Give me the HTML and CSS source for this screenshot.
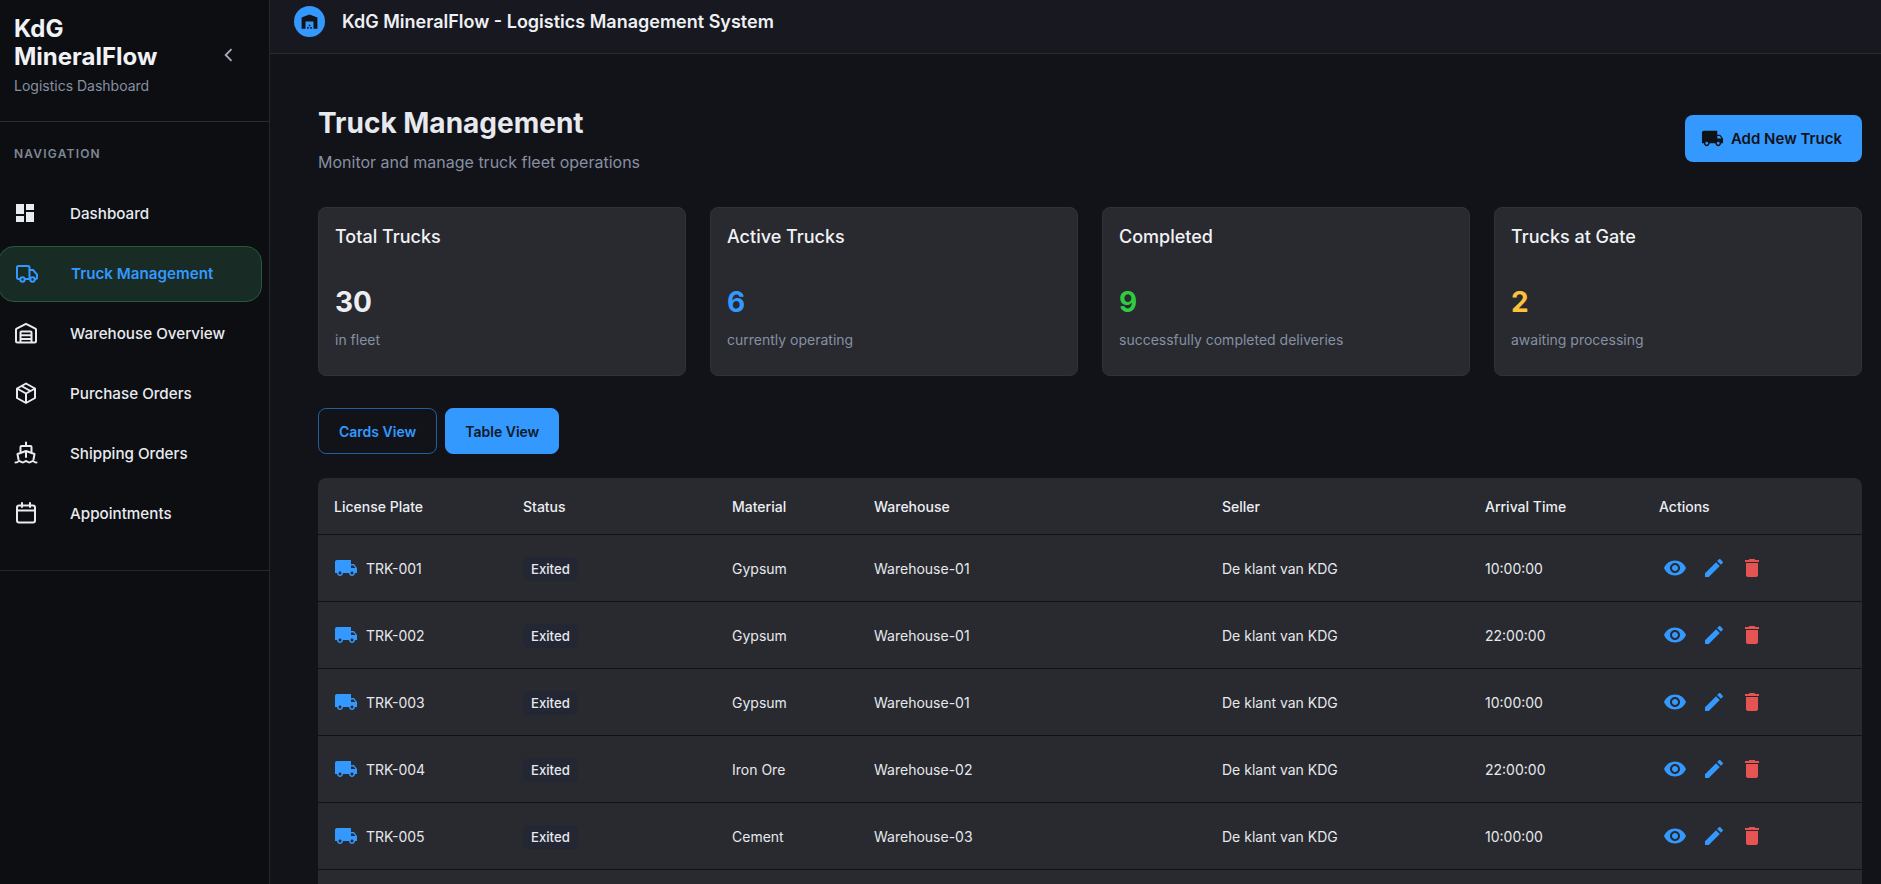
FILE: index.html
```html
<!DOCTYPE html>
<html lang="en">
<head>
<meta charset="UTF-8">
<meta name="viewport" content="width=device-width, initial-scale=1.0">
<title>Truck Management</title>
<link rel="stylesheet" href="styles.css">
</head>
<body>
<div class="app">
  <aside class="sidebar">
    <div class="brand">
      <div>
        <h1>KdG MineralFlow</h1>
        <p>Logistics Dashboard</p>
      </div>
      <svg class="collapse" viewBox="0 0 24 24"><path d="M15 5l-7 7 7 7" fill="none" stroke="currentColor" stroke-width="2.2"/></svg>
    </div>
    <div class="nav-title">NAVIGATION</div>
    <nav class="nav">
      <a class="nav-item">
        <svg class="nav-icon" viewBox="1 0 24 24"><path fill="currentColor" d="M3 13h8V3H3v10zm0 8h8v-6H3v6zm10 0h8V11h-8v10zm0-18v6h8V3h-8z"/></svg>
        <span>Dashboard</span>
      </a>
      <a class="nav-item active">
        <svg class="nav-icon" viewBox="0 0 24 24" fill="none" stroke="currentColor" stroke-width="2" stroke-linecap="round" stroke-linejoin="round"><path d="M5 18H3.5A1.5 1.5 0 0 1 2 16.5V6.5A1.5 1.5 0 0 1 3.5 5H13a1.5 1.5 0 0 1 1.5 1.5V18H10"/><path d="M14.5 9h3.6l3.9 4.6v3.2a1.2 1.2 0 0 1-1.2 1.2H20"/><circle cx="7.5" cy="18.5" r="2.2"/><circle cx="17.5" cy="18.5" r="2.2"/></svg>
        <span>Truck Management</span>
      </a>
      <a class="nav-item">
        <svg class="nav-icon" viewBox="0 0 24 24" fill="none" stroke="currentColor" stroke-width="2" stroke-linejoin="round"><path d="M3.500 21.500A1.500 1.500 0 0 1 2 20V8.500a1 1 0 0 1 .6-.9L12 2.800l9.400 4.800a1 1 0 0 1 .6.9V20a1.500 1.500 0 0 1-1.500 1.500z"/><path d="M6.500 21.500V11.500a1 1 0 0 1 1-1h9a1 1 0 0 1 1 1v10M6.500 14.300h11M6.500 18h11"/></svg>
        <span>Warehouse Overview</span>
      </a>
      <a class="nav-item">
        <svg class="nav-icon" viewBox="0 0 24 24" fill="none" stroke="currentColor" stroke-width="2" stroke-linejoin="round"><path d="M12 2.500l9 5v9.500l-9 5-9-5V7.500z"/><path d="M3 7.500l9 5 9-5M12 12.500V22M7.500 5l9 5"/></svg>
        <span>Purchase Orders</span>
      </a>
      <a class="nav-item">
        <svg class="nav-icon" viewBox="0 0 24 24" fill="none" stroke="currentColor" stroke-width="2" stroke-linejoin="round" stroke-linecap="round"><path d="M12 1.500V5M6.500 10.500V6a1 1 0 0 1 1-1h9a1 1 0 0 1 1 1v4.500M4.500 18.500L3.500 13 12 10l8.500 3-1 5.500M12 10v6"/><path d="M1.500 21.500c2 0 3-1.500 3.800-1.500s1.700 1.500 3.400 1.500 2.500-1.500 3.300-1.500 1.600 1.500 3.300 1.500 2.600-1.500 3.400-1.500 1.800 1.500 3.800 1.500"/></svg>
        <span>Shipping Orders</span>
      </a>
      <a class="nav-item">
        <svg class="nav-icon" viewBox="0 0 24 24" fill="none" stroke="currentColor" stroke-width="2" stroke-linejoin="round" stroke-linecap="round"><rect x="3" y="4.500" width="18" height="17" rx="2"/><path d="M3 9.500h18M8 2v4M16 2v4"/></svg>
        <span>Appointments</span>
      </a>
    </nav>
    <div class="sidebar-line"></div>
  </aside>

  <div class="content">
    <header class="topbar">
      <div class="logo">
        <svg viewBox="0 0 24 24"><path fill="#12141a" d="M22 21V7L12 3 2 7v14h5v-9h10v9h5zm-11-2H9v2h2v-2zm2-3h-2v2h2v-2zm2 3h-2v2h2v-2z"/></svg>
      </div>
      <span class="topbar-title">KdG MineralFlow - Logistics Management System</span>
    </header>

    <main class="main">
      <div class="page-head">
        <div>
          <h2>Truck Management</h2>
          <p>Monitor and manage truck fleet operations</p>
        </div>
        <button class="btn-add">
          <svg class="truck" viewBox="0 0 24 24"><path fill="currentColor" d="M20 8h-3V4H3c-1.100 0-2 .9-2 2v11h2c0 1.660 1.340 3 3 3s3-1.340 3-3h6c0 1.660 1.340 3 3 3s3-1.340 3-3h2v-5l-3-4zM6 18.500c-.83 0-1.500-.67-1.500-1.500s.67-1.500 1.500-1.500 1.500.67 1.500 1.500-.67 1.500-1.500 1.500zm13.500-9l1.960 2.500H17V9.500h2.500zm-1.500 9c-.83 0-1.500-.67-1.500-1.500s.67-1.500 1.500-1.500 1.500.67 1.500 1.500-.67 1.500-1.500 1.500z"/></svg>
          Add New Truck
        </button>
      </div>

      <section class="stats">
        <div class="stat">
          <h3>Total Trucks</h3>
          <div class="stat-num">30</div>
          <div class="stat-sub">in fleet</div>
        </div>
        <div class="stat">
          <h3>Active Trucks</h3>
          <div class="stat-num blue">6</div>
          <div class="stat-sub">currently operating</div>
        </div>
        <div class="stat">
          <h3>Completed</h3>
          <div class="stat-num green">9</div>
          <div class="stat-sub">successfully completed deliveries</div>
        </div>
        <div class="stat">
          <h3>Trucks at Gate</h3>
          <div class="stat-num yellow">2</div>
          <div class="stat-sub">awaiting processing</div>
        </div>
      </section>

      <div class="views">
        <button class="view-btn">Cards View</button>
        <button class="view-btn selected">Table View</button>
      </div>

      <table class="trucks">
        <thead>
          <tr>
            <th class="c-plate">License Plate</th>
            <th class="c-status">Status</th>
            <th class="c-material">Material</th>
            <th class="c-warehouse">Warehouse</th>
            <th class="c-seller">Seller</th>
            <th class="c-time">Arrival Time</th>
            <th>Actions</th>
          </tr>
        </thead>
        <tbody id="rows"></tbody>
      </table>
    </main>
  </div>
</div>
<script>
    const trucks = [
        ['TRK-001', 'Gypsum', 'Warehouse-01', '10:00:00'],
        ['TRK-002', 'Gypsum', 'Warehouse-01', '22:00:00'],
        ['TRK-003', 'Gypsum', 'Warehouse-01', '10:00:00'],
        ['TRK-004', 'Iron Ore', 'Warehouse-02', '22:00:00'],
        ['TRK-005', 'Cement', 'Warehouse-03', '10:00:00']
    ];
    const truckPath = 'M20 8h-3V4H3c-1.100 0-2 .9-2 2v11h2c0 1.660 1.340 3 3 3s3-1.340 3-3h6c0 1.660 1.340 3 3 3s3-1.340 3-3h2v-5l-3-4zM6 18.500c-.83 0-1.500-.67-1.500-1.500s.67-1.500 1.500-1.500 1.500.67 1.500 1.500-.67 1.500-1.500 1.500zm13.500-9l1.960 2.500H17V9.500h2.500zm-1.500 9c-.83 0-1.500-.67-1.500-1.500s.67-1.500 1.500-1.500 1.500.67 1.500 1.500-.67 1.500-1.500 1.500z';
    document.getElementById('rows').innerHTML = trucks.map(t => `
        <tr>
            <td><div class="plate"><svg class="truck" viewBox="0 0 24 24"><path fill="currentColor" d="${truckPath}"/></svg>${t[0]}</div></td>
            <td><span class="badge">Exited</span></td>
            <td>${t[1]}</td>
            <td>${t[2]}</td>
            <td>De klant van KDG</td>
            <td>${t[3]}</td>
            <td><div class="actions">
                <svg class="blue-icon" viewBox="0 0 24 24"><path fill="currentColor" d="M12 4.500C7 4.500 2.730 7.610 1 12c1.730 4.390 6 7.500 11 7.500s9.270-3.110 11-7.500c-1.730-4.390-6-7.500-11-7.500zM12 17c-2.760 0-5-2.240-5-5s2.240-5 5-5 5 2.240 5 5-2.240 5-5 5zm0-8c-1.660 0-3 1.340-3 3s1.340 3 3 3 3-1.340 3-3-1.340-3-3-3z"/></svg>
                <svg class="blue-icon" viewBox="0 0 24 24"><path fill="currentColor" d="M3 17.250V21h3.750L17.810 9.940l-3.750-3.750L3 17.250zM20.710 7.040c.39-.39.39-1.020 0-1.410l-2.340-2.340c-.39-.39-1.020-.39-1.410 0l-1.830 1.830 3.750 3.750 1.830-1.830z"/></svg>
                <svg class="red-icon" viewBox="0 0 24 24"><path fill="currentColor" d="M6 19c0 1.100.9 2 2 2h8c1.100 0 2-.9 2-2V7H6v12zM19 4h-3.500l-1-1h-5l-1 1H5v2h14V4z"/></svg>
            </div></td>
        </tr>`).join('') + '<tr class="row-rest"><td colspan="7"></td></tr>';
</script>
</body>
</html>
```

FILE: styles.css
```css
* {
    box-sizing: border-box;
}

html, body {
    margin: 0;
    height: 884px;
    overflow: hidden;
}

body {
    font-family: Inter, "Noto Sans", sans-serif;
    background-color: #121318;
    color: #eceef2;
}

h1, h2, h3, p {
    margin: 0;
}

button {
    font-family: inherit;
    cursor: pointer;
}

.app {
    display: flex;
    height: 884px;
}

/* sidebar */
.sidebar {
    width: 270px;
    flex-shrink: 0;
    background-color: #0d0e12;
    border-right: 1px solid #26272d;
}

.brand {
    height: 122px;
    padding: 15px 14px 0;
    display: flex;
    justify-content: space-between;
    border-bottom: 1px solid #2a2b31;
}

.brand h1 {
    width: 160px;
    font-size: 24px;
    line-height: 28px;
    font-weight: 700;
    color: #f0f2f6;
}

.brand p {
    margin-top: 5px;
    font-size: 14px;
    line-height: 20px;
    color: #8690a2;
}

.collapse {
    width: 20px;
    height: 20px;
    margin: 30px 16px 0 0;
    color: #a6adba;
}

.nav-title {
    margin: 24px 14px 0;
    font-size: 12px;
    line-height: 16px;
    font-weight: 600;
    letter-spacing: 1.2px;
    color: #7f8794;
}

.nav {
    margin-top: 24px;
}

.nav-item {
    display: flex;
    align-items: center;
    height: 56px;
    margin: 0 7px 4px 0;
    padding: 0 0 2px 14px;
    font-size: 15.2px;
    font-weight: 500;
    color: #e8ebf0;
}

.nav-item.active {
    margin-left: -2px;
    padding-left: 16px;
    background-color: #182b25;
    border: 1px solid #255a3c;
    border-radius: 16px;
    color: #3399ff;
    font-weight: 600;
}

.nav-icon {
    width: 24px;
    height: 24px;
    margin-right: 32px;
    flex-shrink: 0;
}

.sidebar-line {
    margin-top: 28px;
    border-top: 1px solid #26272d;
}

/* top bar */
.content {
    flex: 1;
    min-width: 0;
}

.topbar {
    height: 54px;
    padding: 0 0 2px 24px;
    display: flex;
    align-items: flex-start;
    background-color: #181920;
    border-bottom: 1px solid #2a2b32;
}

.logo {
    width: 31px;
    height: 31px;
    margin: 6px 0 0 0;
    border-radius: 50%;
    background-color: #3399ff;
    display: flex;
    align-items: center;
    justify-content: center;
}

.logo svg {
    width: 19px;
    height: 19px;
}

.topbar-title {
    margin: 10px 0 0 17px;
    font-size: 18px;
    line-height: 24px;
    font-weight: 600;
    color: #eef0f4;
}

/* main */
.main {
    padding: 50px 19px 0 48px;
}

.page-head {
    display: flex;
    justify-content: space-between;
    align-items: center;
}

.page-head h2 {
    font-size: 28px;
    line-height: 38px;
    font-weight: 700;
    color: #e6e9ee;
}

.page-head p {
    margin-top: 8px;
    font-size: 16px;
    line-height: 24px;
    color: #8690a2;
}

.btn-add {
    display: flex;
    align-items: center;
    height: 47px;
    margin-bottom: 1px;
    padding: 0 20px 0 16px;
    border: none;
    border-radius: 8px;
    background-color: #3399ff;
    color: #0f1218;
    font-size: 15px;
    font-weight: 600;
}

.btn-add .truck {
    width: 23px;
    height: 23px;
    margin-right: 7px;
    color: inherit;
}

.stats {
    margin-top: 33px;
    display: grid;
    grid-template-columns: repeat(4, 1fr);
    gap: 24px;
}

.stat {
    height: 169px;
    padding: 17px 16px 0;
    background-color: #282a30;
    border: 1px solid #303238;
    border-radius: 8px;
}

.stat h3 {
    font-size: 18px;
    line-height: 24px;
    font-weight: 500;
    color: #f0f2f6;
}

.stat-num {
    margin-top: 34px;
    font-size: 28px;
    line-height: 38px;
    font-weight: 700;
}

.stat-sub {
    margin-top: 9px;
    font-size: 14px;
    line-height: 20px;
    color: #8690a2;
}

.blue { color: #3399ff; }
.green { color: #2ecc40; }
.yellow { color: #fdc13a; }

.views {
    margin-top: 32px;
    display: flex;
    gap: 8px;
}

.view-btn {
    height: 46px;
    padding: 0 20px;
    border: 1px solid #1f5f9f;
    border-radius: 8px;
    background: transparent;
    color: #3399ff;
    font-size: 14px;
    font-weight: 600;
}

.view-btn.selected {
    padding: 0 19px;
    background-color: #3399ff;
    border-color: #3399ff;
    color: #0f1a28;
}

/* table */
.trucks {
    width: 100%;
    margin-top: 24px;
    border-collapse: separate;
    border-spacing: 0;
    table-layout: fixed;
    background-color: #282a30;
    border-radius: 8px;
    font-size: 14px;
}

.trucks th {
    height: 57px;
    padding: 0 0 0 16px;
    text-align: left;
    font-weight: 500;
    color: #eceef2;
    border-bottom: 1px solid #111216;
}

.trucks td {
    height: 67px;
    padding: 0 0 0 16px;
    color: #e6e8ec;
    border-bottom: 1px solid #111216;
}

/* rest of the next row, runs past the bottom of the window */
.trucks .row-rest td {
    height: 40px;
    border-bottom: none;
}

.c-plate { width: 189px; }
.c-status { width: 209px; }
.c-material { width: 142px; }
.c-warehouse { width: 348px; }
.c-seller { width: 263px; }
.c-time { width: 174px; }

.plate {
    display: flex;
    align-items: center;
    gap: 8px;
}

.truck {
    width: 24px;
    height: 24px;
    color: #3399ff;
    flex-shrink: 0;
}

.badge {
    display: inline-block;
    margin-top: 2px;
    padding: 3px 8px;
    line-height: 18px;
    font-size: 13.2px;
    font-weight: 500;
    background-color: #232733;
    border-radius: 6px;
}

.actions {
    display: flex;
    align-items: center;
    gap: 15px;
    margin-left: 4px;
}

.actions svg {
    width: 24px;
    height: 24px;
}

.actions .red-icon {
    margin-left: -1px;
}

.blue-icon { color: #3399ff; }
.red-icon { color: #e55353; }
```
